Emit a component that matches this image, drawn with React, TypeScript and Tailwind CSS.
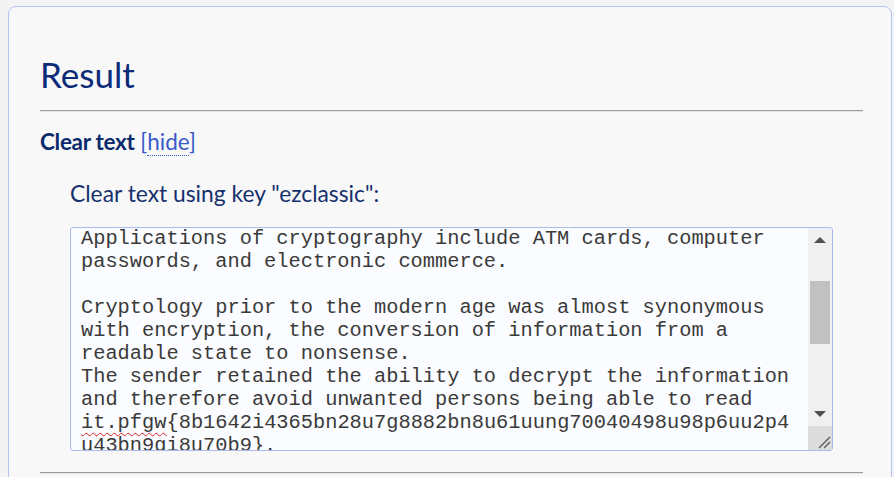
import React from "react";

const lines: React.ReactNode[] = [
  "Applications of cryptography include ATM cards, computer",
  "passwords, and electronic commerce.",
  "",
  "Cryptology prior to the modern age was almost synonymous",
  "with encryption, the conversion of information from a",
  "readable state to nonsense.",
  "The sender retained the ability to decrypt the information",
  "and therefore avoid unwanted persons being able to read",
  <>
    <span className="underline decoration-wavy decoration-[#e02020] decoration-1 underline-offset-[4px]">it.pfgw</span>
    {"{8b1642i4365bn28u7g8882bn8u61uung70040498u98p6uu2p4"}
  </>,
  "u43bn9gi8u70b9}.",
];

export default function App() {
  return (
    <div className="w-[894px] h-[477px] overflow-hidden bg-[#f3f3f3] pt-[6px] pl-[8px]" style={{ fontFamily: "Lato, 'Noto Sans', sans-serif" }}>
      <div className="w-[884px] h-[520px] rounded-[8px] border border-[#b4c4f2] bg-[#f8f8f8] pl-[31px] pr-[28px]">
        <div className="h-[103px] pt-[47px] text-[35px] leading-[40px] text-[#0b2a78]">Result</div>
        <div className="border-t border-[#9a9a9a] border-b border-b-[#e6e6e6] h-[2px]"></div>
        <div className="pt-[16px] h-[60px] text-[22.5px] leading-[27px]">
          <span className="font-bold text-[#0b2a6e] tracking-[-0.3px]">Clear text</span>{" "}
          <span className="text-[#3a59c8]">
            [<span className="border-b border-dotted border-[#3a59c8]">hide</span>]
          </span>
        </div>
        <div className="pl-[30px]">
          <div className="h-[55px] pt-[8px] text-[22.8px] leading-[27px] text-[#16306e]">Clear text using key "ezclassic":</div>
          <div className="relative w-[763px] h-[224px] rounded-[3px] border border-[#aabcee] bg-[#fbfcff] overflow-hidden">
            <div
              className="pl-[10px] text-[20.35px] leading-[23px] text-[#3a3a3a] whitespace-pre -mt-[1px]"
              style={{ fontFamily: "'Courier New', 'Nimbus Mono PS', 'Nimbus Mono L', FreeMono, 'Liberation Mono', monospace" }}
            >
              {lines.map((l, i) => (
                <div key={i} className="h-[23px]">{l}</div>
              ))}
            </div>
            <div className="absolute right-0 top-0 bottom-0 w-[24px] bg-[#f0f0f0] flex flex-col">
              <div className="h-[24px] flex items-center justify-center">
                <div className="w-0 h-0 border-l-[6px] border-r-[6px] border-b-[6px] border-l-transparent border-r-transparent border-b-[#505050]"></div>
              </div>
              <div className="h-[29px]"></div>
              <div className="mx-[2px] h-[63px] bg-[#c1c1c1]"></div>
              <div className="flex-1"></div>
              <div className="h-[24px] flex items-center justify-center">
                <div className="w-0 h-0 border-l-[6px] border-r-[6px] border-t-[6px] border-l-transparent border-r-transparent border-t-[#505050]"></div>
              </div>
              <div className="h-[24px] bg-[#dcdcdc] relative">
                <svg width="24" height="24" viewBox="0 0 24 24" className="absolute inset-0">
                  <line x1="11" y1="22" x2="22" y2="11" stroke="#555" strokeWidth="1.3" />
                  <line x1="16" y1="22" x2="22" y2="16" stroke="#555" strokeWidth="1.3" />
                </svg>
              </div>
            </div>
          </div>
        </div>
        <div className="mt-[21px] border-t border-[#9a9a9a] border-b border-b-[#e6e6e6] h-[2px]"></div>
      </div>
    </div>
  );
}
